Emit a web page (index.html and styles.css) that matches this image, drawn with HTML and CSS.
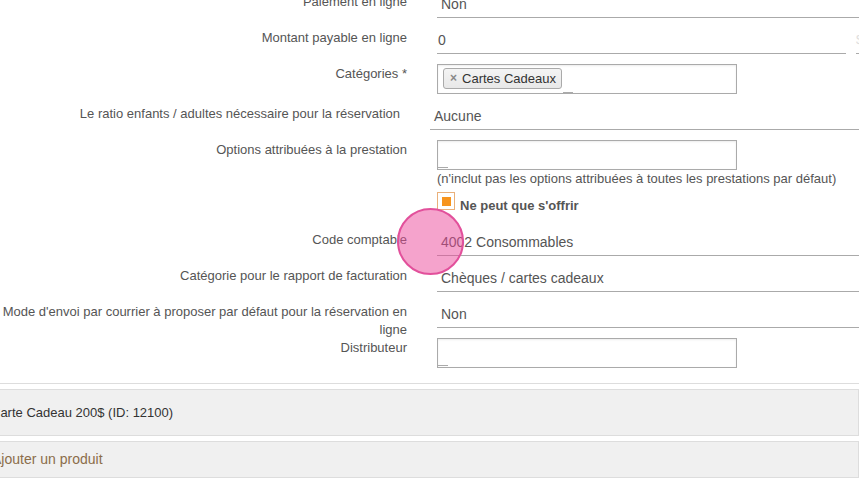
FILE: index.html
```html
<!DOCTYPE html>
<html lang="fr">
<head>
<meta charset="UTF-8">
<title>Prestation - Carte Cadeau</title>
<link rel="stylesheet" href="styles.css">
</head>
<body>

<div class="page">
    <div class="form-section">
        <div class="row">
            <label class="row-label">Paiement en ligne</label>
            <div class="row-value"><div class="line-field">Non</div></div>
        </div>
        <div class="row">
            <label class="row-label">Montant payable en ligne</label>
            <div class="row-value amount">
                <div class="line-field tight">0</div>
                <span class="addon">$</span>
            </div>
        </div>
        <div class="row">
            <label class="row-label">Catégories *</label>
            <div class="row-value">
                <div class="box-field">
                    <span class="chip"><span class="chip-x">×</span>Cartes Cadeaux</span>
                    <span class="stub chip-stub"></span>
                </div>
            </div>
        </div>
        <div class="row shift">
            <label class="row-label">Le ratio enfants / adultes nécessaire pour la réservation</label>
            <div class="row-value"><div class="line-field">Aucune</div></div>
        </div>
        <div class="row">
            <label class="row-label">Options attribuées à la prestation</label>
            <div class="row-value">
                <div class="box-field"><span class="stub"></span></div>
                <div class="help">(n'inclut pas les options attribuées à toutes les prestations par défaut)</div>
                <div class="check">
                    <span class="check-box"><span class="check-mark"></span></span>
                    <span class="check-label">Ne peut que s'offrir</span>
                </div>
            </div>
        </div>
        <div class="row">
            <label class="row-label">Code comptable</label>
            <div class="row-value"><div class="line-field">4002 Consommables</div></div>
        </div>
        <div class="row">
            <label class="row-label">Catégorie pour le rapport de facturation</label>
            <div class="row-value"><div class="line-field">Chèques / cartes cadeaux</div></div>
        </div>
        <div class="row">
            <label class="row-label">Mode d'envoi par courrier à proposer par défaut pour la réservation en ligne</label>
            <div class="row-value"><div class="line-field">Non</div></div>
        </div>
        <div class="row">
            <label class="row-label">Distributeur</label>
            <div class="row-value">
                <div class="box-field"><span class="stub"></span></div>
            </div>
        </div>
    </div>

    <div class="panel product">Carte Cadeau 200$ (ID: 12100)</div>
    <div class="panel add">Ajouter un produit</div>
</div>

<div class="click-dot"></div>

</body>
</html>
```

FILE: styles.css
```css
body {
    margin: 0;
    font-family: "Liberation Sans", Arial, sans-serif;
    font-size: 13px;
    color: #555;
    background: #fff;
    overflow: hidden;
}

.page {
    margin: -12px 0 0 -15px;
}

.form-section {
    padding-bottom: 15px;
    border-bottom: 1px solid #ddd;
}

.row {
    display: grid;
    grid-template-columns: 422px 1fr;
    column-gap: 30px;
    margin-bottom: 6px;
}

.row:last-child {
    margin-bottom: 0;
}

.row.shift {
    margin-left: -7px;
}

.row-label {
    box-sizing: border-box;
    height: 30px;
    padding-top: 5px;
    line-height: 18px;
    text-align: right;
}

.row-value {
    min-width: 0;
}

.line-field {
    box-sizing: border-box;
    height: 30px;
    padding: 7px 4px 0 4px;
    line-height: 18px;
    font-size: 14px;
    border-bottom: 1px solid #aaa;
}

.line-field.tight {
    padding-left: 1px;
}

.amount {
    display: flex;
    margin-right: -27px;
}

.amount .line-field {
    flex: 1;
}

.addon {
    box-sizing: border-box;
    height: 30px;
    width: 30px;
    margin-left: 10px;
    padding-top: 7px;
    line-height: 18px;
    color: #ddd;
    border-bottom: 1px solid #aaa;
}

.box-field {
    box-sizing: border-box;
    width: 300px;
    height: 30px;
    margin-top: 4px;
    padding: 3px 5px 0 5px;
    border: 1px solid #aaa;
    box-shadow: inset 0 1px 2px rgba(0, 0, 0, 0.08);
    display: flex;
    align-items: flex-end;
}

.chip {
    box-sizing: border-box;
    align-self: flex-start;
    height: 21px;
    padding: 0 5px 0 6px;
    line-height: 19px;
    border: 1px solid #aaa;
    border-radius: 3px;
    background: linear-gradient(#f4f4f4, #e8e8e8);
    color: #333;
    display: flex;
    gap: 5px;
}

.chip-x {
    color: #888;
    font-weight: bold;
    font-size: 12px;
}

.stub {
    width: 10px;
    border-bottom: 1px solid #aaa;
    margin-bottom: 1px;
    margin-left: -5px;
}

.chip-stub {
    margin-left: 1px;
    margin-bottom: 0;
}

.help {
    line-height: 18px;
    white-space: nowrap;
}

.check {
    display: flex;
    align-items: flex-end;
    gap: 5px;
    margin-top: 4px;
    margin-bottom: 10px;
}

.check-box {
    box-sizing: border-box;
    width: 18px;
    height: 18px;
    border: 1px solid #eab07a;
    background: #fff;
    display: flex;
    align-items: center;
    justify-content: center;
}

.check-mark {
    width: 9px;
    height: 9px;
    background: #f7941d;
}

.check-label {
    font-weight: bold;
    line-height: 14px;
    margin-bottom: -3px;
}

.panel {
    box-sizing: border-box;
    margin-top: 5px;
    height: 47px;
    padding: 0 6px;
    line-height: 45px;
    background: #f0f0f0;
    border: 1px solid #ddd;
    color: #333;
}

.panel.product {
    padding-left: 5px;
}

.panel.add {
    height: 37px;
    line-height: 35px;
    font-size: 14px;
    color: #8b6d4a;
}

.click-dot {
    position: absolute;
    left: 397px;
    top: 208px;
    width: 63px;
    height: 63px;
    border-radius: 50%;
    background: rgba(236, 72, 153, 0.5);
    border: 2px solid #e2509b;
}
```
